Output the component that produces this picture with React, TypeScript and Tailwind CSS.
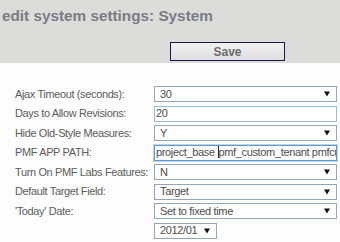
const Arrow = () => (
  <svg width="6" height="6" viewBox="0 0 6 6" className="shrink-0">
    <path d="M0 0.5 H6 L3 5.5 Z" fill="#111" />
  </svg>
);

const SelectBox = ({ value, w = "w-[183px]" }: { value: string; w?: string }) => (
  <div
    className={`${w} h-[16px] border border-[#95a5ba] bg-white flex items-center justify-between pl-[5px] pr-[6px] text-[11px] tracking-[-0.35px] text-[#4d4d4d]`}
  >
    <span className="leading-none">{value}</span>
    <Arrow />
  </div>
);

const TextBox = ({ children, focused }: { children: React.ReactNode; focused?: boolean }) => (
  <div
    className={`w-[183px] h-[16px] bg-white flex items-center overflow-hidden whitespace-nowrap pl-[1px] text-[11px] tracking-[-0.35px] text-[#4d4d4d] border ${
      focused ? "border-[#5f98d6] shadow-[0_0_0_1px_#b9d4ef]" : "border-[#92bde3]"
    }`}
  >
    <span className="leading-none">{children}</span>
  </div>
);

const Row = ({ label, children }: { label: string; children: React.ReactNode }) => (
  <div className="flex items-center h-[16px]">
    <div className="w-[154px] pl-[15px] text-[11px] tracking-[-0.37px] text-[#5c5c5c] whitespace-nowrap leading-none">
      {label}
    </div>
    {children}
  </div>
);

export default function App() {
  return (
    <div className="min-h-screen w-full bg-[#fcfdfc] font-['Liberation_Sans',Arial,sans-serif]">
      {/* Header */}
      <div className="bg-[#dcdddb] pt-[7px] pb-[2px]">
        <h1 className="pl-[2px] text-[15.3px] leading-[18px] font-bold text-[#7a7c84]">
          edit system settings: System
        </h1>
        <button className="mt-[17px] ml-[170px] w-[115px] h-[19px] border border-[#1d1650] bg-gradient-to-b from-[#f2f2f2] to-[#dedede] text-[12px] font-bold text-[#6b6b70] flex items-center justify-center">
          Save
        </button>
      </div>

      {/* Settings */}
      <div className="pt-[23px] flex flex-col gap-[3.5px]">
        <Row label="Ajax Timeout (seconds):">
          <SelectBox value="30" />
        </Row>
        <Row label="Days to Allow Revisions:">
          <TextBox>20</TextBox>
        </Row>
        <Row label="Hide Old-Style Measures:">
          <SelectBox value="Y" />
        </Row>
        <Row label="PMF APP PATH:">
          <TextBox focused>
            project_base <span className="border-l border-[#222]">pmf_custom_tenant pmfcu</span>
          </TextBox>
        </Row>
        <Row label="Turn On PMF Labs Features:">
          <SelectBox value="N" />
        </Row>
        <Row label="Default Target Field:">
          <SelectBox value="Target" />
        </Row>
        <Row label="'Today' Date:">
          <SelectBox value="Set to fixed time" />
        </Row>
        <div className="flex h-[16px] pl-[154px]">
          <SelectBox value="2012/01" w="w-[63px]" />
        </div>
      </div>
    </div>
  );
}
